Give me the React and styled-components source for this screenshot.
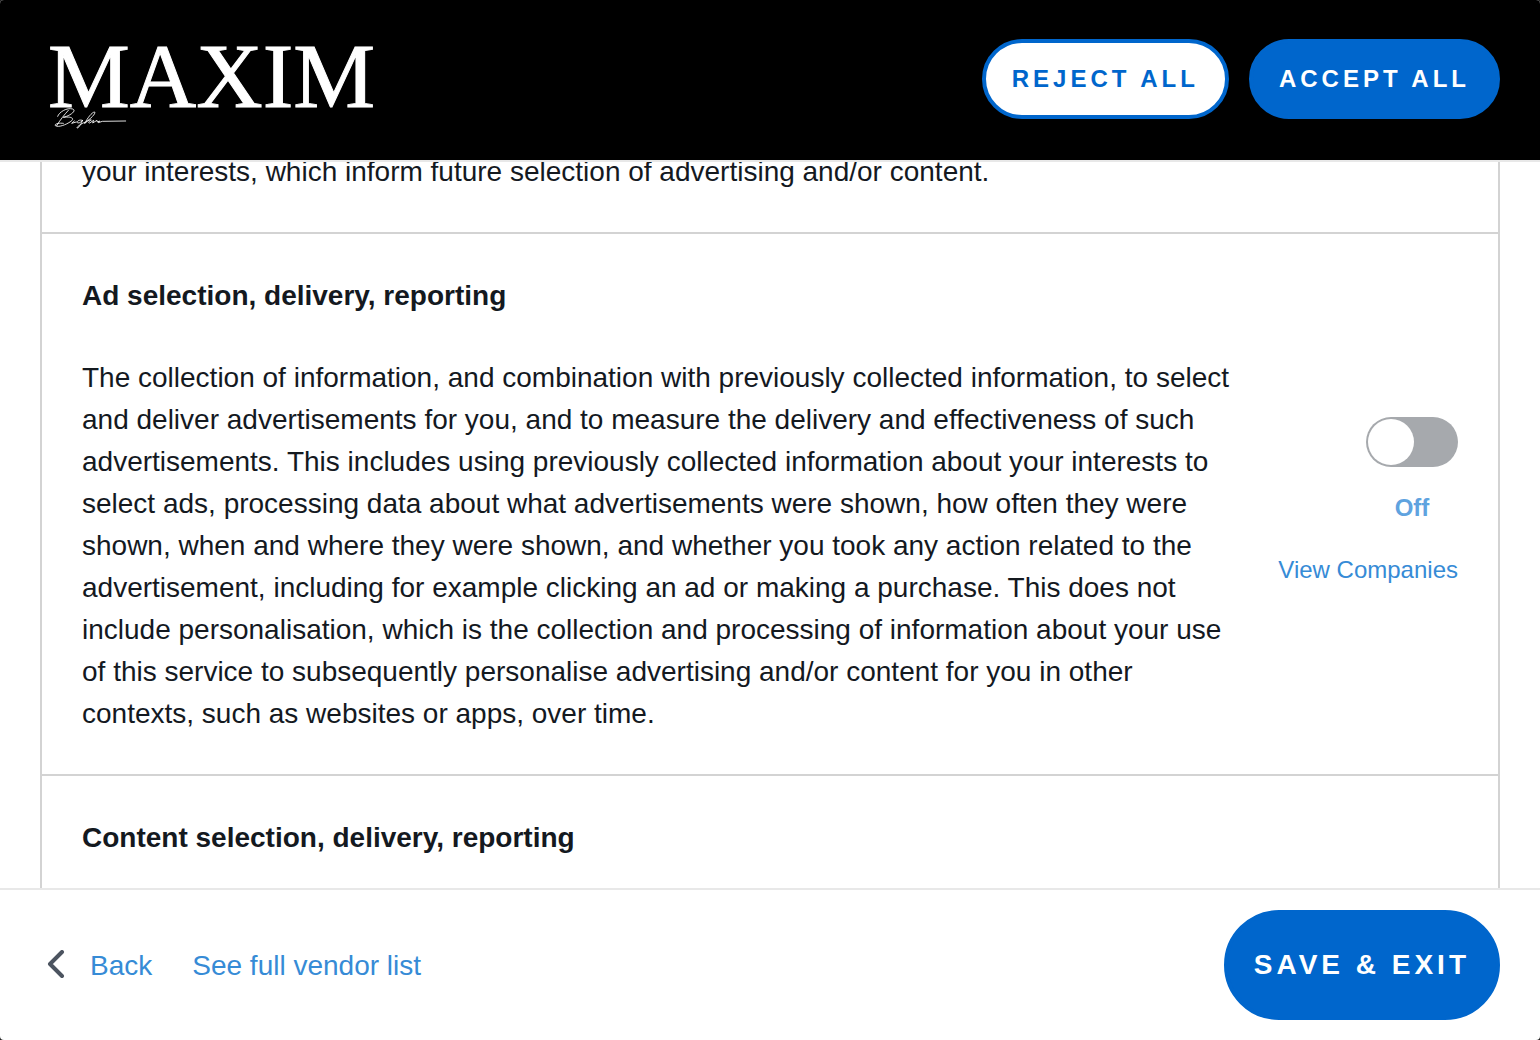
import React, { useState } from "react";
import styled, { createGlobalStyle } from "styled-components";

const GlobalStyle = createGlobalStyle`
  *, *::before, *::after { box-sizing: border-box; }
  body {
    margin: 0;
    background: #222;
    color: #14191f;
    font-family: "Liberation Sans", Arial, Helvetica, sans-serif;
    font-size: 28px;
    line-height: 42px;
  }
`;

const Dialog = styled.div`
  display: flex;
  flex-direction: column;
  height: 100vh;
  overflow: hidden;
  background: #fff;
  border-radius: 4px;
`;

const Header = styled.header`
  display: flex;
  align-items: center;
  justify-content: space-between;
  padding: 39px 40px 41px 48px;
  background: #000;
  flex: none;
`;

const Brand = styled.svg`
  display: block;
  width: 340px;
  height: 104px;
  margin: -12px 0;
  fill: #fff;
  overflow: visible;
`;

const BrandName = styled.text`
  font-family: "Liberation Serif", "Times New Roman", serif;
  font-size: 92px;
  stroke: #fff;
  stroke-width: 1px;
`;

const Actions = styled.div`
  display: flex;
  gap: 20px;
`;

const Button = styled.button`
  height: ${(p) => (p.$large ? 110 : 80)}px;
  padding: 0 26px;
  border: 4px solid #0066cc;
  border-radius: 55px;
  background: ${(p) => (p.$outline ? "#fff" : "#0066cc")};
  color: ${(p) => (p.$outline ? "#0066cc" : "#fff")};
  font-family: inherit;
  font-size: ${(p) => (p.$large ? 28 : 24)}px;
  font-weight: 700;
  letter-spacing: 4px;
  text-transform: uppercase;
  white-space: nowrap;
  cursor: pointer;
`;

const Content = styled.main`
  flex: 1;
  min-height: 0;
  overflow: hidden;
  padding: 0 40px;
  border-top: 2px solid #e8e8e8;
  border-bottom: 2px solid #e8e8e8;
`;

/* The list opens part-way scrolled, with its first entry under the header. */
const PurposeList = styled.ul`
  list-style: none;
  margin: -54px 0 0;
  padding: 0;
  border: 2px solid #d3d3d3;
`;

const Purpose = styled.li`
  display: flex;
  align-items: center;
  gap: 40px;
  padding: 41px 40px 39px;

  & + & { border-top: 2px solid #d3d3d3; }
`;

const Copy = styled.div`
  display: flex;
  flex-direction: column;
  gap: 40px;
  flex: 1;
`;

const Title = styled.h2`
  margin: 0;
  font-size: 28px;
  font-weight: 700;
`;

const Text = styled.p`
  margin: 0;
`;

const Side = styled.div`
  display: flex;
  flex-direction: column;
  align-items: flex-end;
  gap: 20px;
  padding-bottom: 2px;
  font-size: 24px;
`;

const SwitchLabel = styled.label`
  display: flex;
  flex-direction: column;
  align-items: center;
  gap: 20px;
  color: #5fa3df;
  font-weight: 700;
  cursor: pointer;
`;

const Switch = styled.input`
  appearance: none;
  display: flex;
  width: 92px;
  height: 50px;
  margin: 0;
  padding: 2px;
  border-radius: 25px;
  background: #a6a9ad;
  cursor: pointer;

  &::before {
    content: "";
    width: 46px;
    height: 46px;
    border-radius: 50%;
    background: #fff;
  }
  &:checked { background: #0066cc; justify-content: flex-end; }
`;

const Link = styled.a`
  display: flex;
  align-items: center;
  gap: 18px;
  color: #368bd6;
  text-decoration: none;
  white-space: nowrap;
`;

const Footer = styled.footer`
  display: flex;
  align-items: center;
  justify-content: space-between;
  padding: 20px 40px;
  flex: none;
`;

const FooterLinks = styled.nav`
  display: flex;
  gap: 40px;
  padding-top: 2px;
`;

const Chevron = styled.svg`
  width: 32px;
  height: 32px;
  fill: none;
  stroke: #4c5460;
  stroke-width: 4;
  stroke-linecap: round;
  stroke-linejoin: round;
`;

function Logo() {
  return (
    <Brand viewBox="0 0 340 104" role="img" aria-label="Maxim">
      <BrandName x="0" y="80">MAXIM</BrandName>
      <g
        transform="translate(-3 73) scale(0.3333)"
        fill="none"
        stroke="#fff"
        strokeWidth="2.6"
        strokeLinecap="round"
        strokeLinejoin="round"
      >
        <path d="M70 31 C58 44 44 62 35 77" />
        <path d="M38 49 C42 36 66 22 83 27 C96 32 76 47 55 52 C76 49 91 54 78 64 C62 75 40 83 31 77 C27 72 42 68 55 70" />
        <path d="M88 63 L80 70 L94 66 M112 61 C102 57 93 66 98 69 C104 70 112 63 113 60 C110 68 104 82 97 84 C92 84 105 72 122 66 C136 57 153 41 149 36 C141 36 126 56 119 71 C125 64 133 58 139 60 C132 62 128 70 134 69 L146 61 L143 69 L156 61 L157 66 L164 63 L160 68 L172 64 L242 63" />
      </g>
    </Brand>
  );
}

function PurposeSwitch() {
  const [on, setOn] = useState(false);
  return (
    <SwitchLabel>
      <Switch type="checkbox" checked={on} onChange={() => setOn(!on)} />
      {on ? "On" : "Off"}
    </SwitchLabel>
  );
}

export default function App() {
  return (
    <>
      <GlobalStyle />
      <Dialog>
        <Header>
          <Logo />
          <Actions>
            <Button $outline>Reject all</Button>
            <Button>Accept all</Button>
          </Actions>
        </Header>
        <Content>
          <PurposeList>
            <Purpose>
              <Text>your interests, which inform future selection of advertising and/or content.</Text>
            </Purpose>
            <Purpose>
              <Copy>
                <Title>Ad selection, delivery, reporting</Title>
                <Text>
                  The collection of information, and combination with previously collected
                  information, to select and deliver advertisements for you, and to measure the
                  delivery and effectiveness of such advertisements. This includes using previously
                  collected information about your interests to select ads, processing data about
                  what advertisements were shown, how often they were shown, when and where they
                  were shown, and whether you took any action related to the advertisement,
                  including for example clicking an ad or making a purchase. This does not include
                  personalisation, which is the collection and processing of information about your
                  use of this service to subsequently personalise advertising and/or content for you
                  in other contexts, such as websites or apps, over time.
                </Text>
              </Copy>
              <Side>
                <PurposeSwitch />
                <Link href="#companies">View Companies</Link>
              </Side>
            </Purpose>
            <Purpose>
              <Title>Content selection, delivery, reporting</Title>
            </Purpose>
          </PurposeList>
        </Content>
        <Footer>
          <FooterLinks>
            <Link href="#back">
              <Chevron viewBox="0 0 32 32" aria-hidden="true">
                <path d="M22 2 L10 14 L22 26" />
              </Chevron>
              Back
            </Link>
            <Link href="#vendors">See full vendor list</Link>
          </FooterLinks>
          <Button $large>Save &amp; Exit</Button>
        </Footer>
      </Dialog>
    </>
  );
}
